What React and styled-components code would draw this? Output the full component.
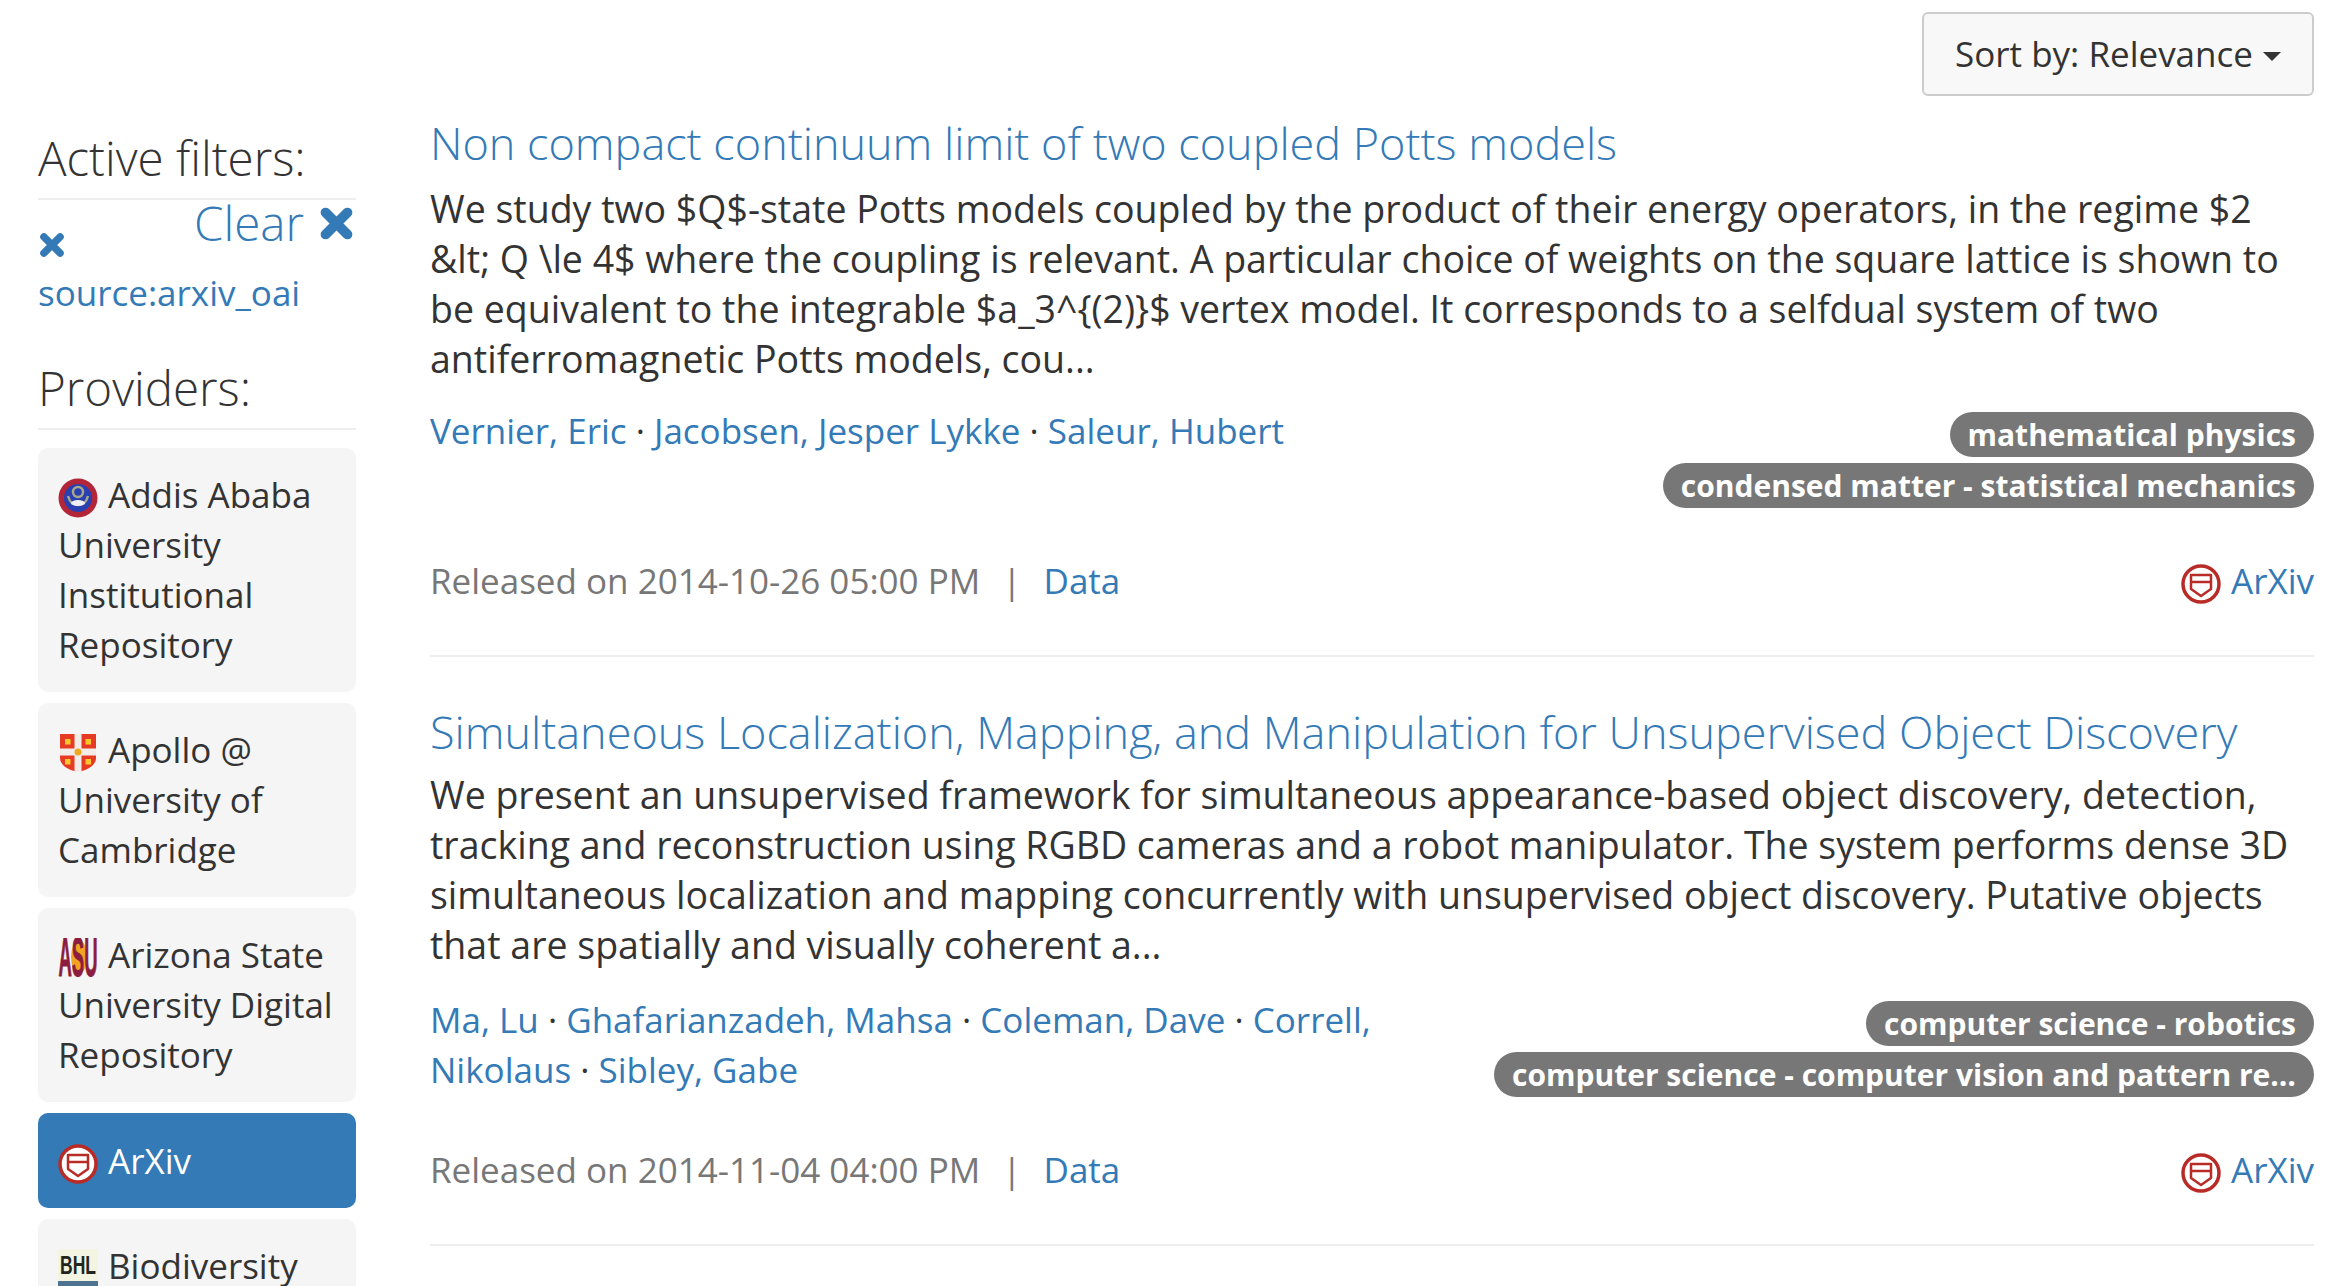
import React from 'react';
import styled, { createGlobalStyle } from 'styled-components';

const GlobalStyle = createGlobalStyle`
  html, body {
    margin: 0;
    height: 100%;
    overflow: hidden;
    background: #fff;
  }
  body {
    font-family: 'Open Sans', sans-serif;
    font-size: 35px;
    line-height: 50px;
    color: #333;
  }
  a {
    color: #337ab7;
    text-decoration: none;
  }
`;

const Page = styled.div`
  height: 1286px;
  overflow: hidden;
  padding: 12px 22px 0 38px;
  box-sizing: border-box;
`;

const Toolbar = styled.div`
  display: flex;
  justify-content: flex-end;
  height: 84px;
`;

const SortButton = styled.button`
  font: inherit;
  color: #333;
  height: 84px;
  width: 392px;
  background: #f8f8f8;
  border: 2px solid #ccc;
  border-radius: 6px;
  display: flex;
  align-items: center;
  justify-content: center;
  gap: 10px;
  padding: 0;
`;

const Caret = styled.span`
  width: 0;
  height: 0;
  border-top: 9px solid #333;
  border-left: 9px solid transparent;
  border-right: 9px solid transparent;
  margin-top: 4px;
`;

const Columns = styled.div`
  display: flex;
  gap: 74px;
`;

const Sidebar = styled.aside`
  width: 318px;
  flex: none;
  padding-top: 37px;
`;

const SideHeading = styled.h4`
  margin: 0;
  font-size: 47.5px;
  font-weight: 300;
  line-height: 50px;
  padding-bottom: 15px;
  border-bottom: 2px solid #eee;
`;

const ClearRow = styled.div`
  position: relative;
  height: 68px;
  padding: 32px 0 0 1px;
  box-sizing: border-box;
`;

const ClearLink = styled.a`
  position: absolute;
  right: 2px;
  top: -2px;
  display: flex;
  align-items: center;
  gap: 15px;
  font-size: 47.5px;
  font-weight: 300;
  line-height: 50px;
`;

const FilterLink = styled.a`
  display: block;
  margin-bottom: 45px;
`;

const ProviderList = styled.div`
  display: flex;
  flex-direction: column;
  gap: 11px;
  margin-top: 18px;
`;

const Provider = styled.a`
  display: block;
  padding: ${({ $active }) => ($active ? '22.5px' : '22px')} 20px;
  border-radius: 10px;
  color: ${({ $active }) => ($active ? '#fff' : '#333')};
  background: ${({ $active }) => ($active ? '#337ab7' : '#f5f5f5')};
`;

const Logo = styled.svg`
  width: 40px;
  height: 40px;
  vertical-align: -10px;
  margin-right: 10px;
`;

const Cross = styled.svg`
  display: block;
  width: ${({ $size }) => $size}px;
  height: ${({ $size }) => $size}px;
  fill: none;
  stroke: #337ab7;
  stroke-width: 9;
  stroke-linecap: round;
`;

const Main = styled.main`
  flex: 1;
  min-width: 0;
  margin-top: 19px;
`;

const Result = styled.article`
  padding-bottom: 49px;
  margin-bottom: 47px;
  border-bottom: 2px solid #eee;
`;

const Title = styled.h3`
  margin: 0;
  font-size: 45px;
  font-weight: 300;
  line-height: 56px;
`;

const Abstract = styled.p`
  margin: ${({ $gap }) => $gap}px 0 0;
  font-size: 37.5px;
`;

const MetaRow = styled.div`
  display: flex;
  justify-content: space-between;
  gap: 40px;
  margin-top: ${({ $gap }) => 35 - $gap}px;
`;

const Authors = styled.div`
  width: 960px;
  flex: none;
`;

const Dot = styled.span`
  color: #333;
`;

const Tags = styled.div`
  display: flex;
  flex-direction: column;
  align-items: flex-end;
  gap: 6px;
  min-width: 0;
  padding-top: 6px;
`;

const Tag = styled.span`
  display: block;
  max-width: 820px;
  box-sizing: border-box;
  height: 45px;
  line-height: 45px;
  padding: 0 18px;
  border-radius: 23px;
  background: #777;
  color: #fff;
  font-size: 30px;
  font-weight: 700;
  white-space: nowrap;
  overflow: hidden;
  text-overflow: ellipsis;
`;

const FootRow = styled.div`
  display: flex;
  justify-content: space-between;
  margin-top: 48px;
  color: #777;
`;

const Pipe = styled.span`
  margin: 0 22px;
`;

const AsuMark = styled.text`
  font-family: 'Liberation Sans', sans-serif;
  font-size: 56px;
  font-weight: 700;
  fill: #8c1d40;
  stroke: #8c1d40;
  stroke-width: 1;
`;

const BhlMark = styled.text`
  font-family: 'Liberation Sans', sans-serif;
  font-size: 25px;
  font-weight: 700;
  fill: #22261d;
`;

const CrossIcon = ({ size }) => (
  <Cross $size={size} viewBox="0 0 32 32">
    <path d="M6 6l20 20M26 6L6 26" />
  </Cross>
);

const ArxivLogo = ({ ring = '#b92b27', fill = '#fff' }) => (
  <Logo viewBox="0 0 40 40">
    <circle cx="20" cy="20" r="18" fill={fill} stroke={ring} strokeWidth="3.5" />
    <path d="M10 11h20v14l-10 7-10-7z" fill="none" stroke={ring} strokeWidth="2.5" strokeLinejoin="round" />
    <path d="M10 18h20" stroke={ring} strokeWidth="2.5" />
  </Logo>
);

const AddisLogo = () => (
  <Logo viewBox="0 0 40 40">
    <circle cx="20" cy="20" r="19.5" fill="#b3263a" />
    <circle cx="20" cy="20" r="14" fill="#2a3fb0" />
    <circle cx="20" cy="14" r="5" fill="none" stroke="#a8a88c" strokeWidth="2.5" />
    <path d="M10 18c2 7 5 9 10 9s8-2 10-9" fill="none" stroke="#a8a88c" strokeWidth="2.5" />
    <ellipse cx="20" cy="25" rx="7" ry="3" fill="#f1eef2" />
  </Logo>
);

const ApolloLogo = () => (
  <Logo viewBox="0 0 40 40">
    <path d="M2 1h36v24c0 7-8 12-18 14C10 37 2 32 2 25z" fill="#e63a25" />
    <path d="M16.500 1h7v38h-7zM2 15.500h36v7H2z" fill="#f2ece8" />
    <circle cx="20" cy="19" r="3.500" fill="#f0a820" />
    <rect x="7" y="6" width="5.500" height="5.500" fill="#fbc52b" />
    <rect x="27.500" y="6" width="5.500" height="5.500" fill="#fbc52b" />
    <rect x="7" y="26" width="5.500" height="5.500" fill="#fbc52b" />
    <rect x="27.500" y="26" width="5.500" height="5.500" fill="#fbc52b" />
  </Logo>
);

const AsuLogo = () => (
  <Logo viewBox="0 0 40 40">
    <ellipse cx="21" cy="19" rx="8" ry="17" fill="#f2a31f" />
    <AsuMark x="20" y="38" textAnchor="middle" textLength="39" lengthAdjust="spacingAndGlyphs">ASU</AsuMark>
  </Logo>
);

const BhlLogo = () => (
  <Logo viewBox="0 0 40 40">
    <rect width="40" height="40" fill="#f3f5e2" />
    <rect y="32" width="40" height="8" fill="#4d7390" />
    <BhlMark x="20" y="25" textAnchor="middle" textLength="36" lengthAdjust="spacingAndGlyphs">BHL</BhlMark>
  </Logo>
);

const providers = [
  { name: 'Addis Ababa University Institutional Repository', logo: <AddisLogo /> },
  { name: 'Apollo @ University of Cambridge', logo: <ApolloLogo /> },
  { name: 'Arizona State University Digital Repository', logo: <AsuLogo /> },
  { name: 'ArXiv', logo: <ArxivLogo />, active: true },
  { name: 'Biodiversity Heritage Library', logo: <BhlLogo /> },
];

const results = [
  {
    title: 'Non compact continuum limit of two coupled Potts models',
    text: 'We study two $Q$-state Potts models coupled by the product of their energy operators, in the regime $2 &lt; Q \\le 4$ where the coupling is relevant. A particular choice of weights on the square lattice is shown to be equivalent to the integrable $a_3^{(2)}$ vertex model. It corresponds to a selfdual system of two antiferromagnetic Potts models, cou...',
    authors: ['Vernier, Eric', 'Jacobsen, Jesper Lykke', 'Saleur, Hubert'],
    tags: ['mathematical physics', 'condensed matter - statistical mechanics'],
    date: '2014-10-26 05:00 PM',
    gap: 13,
  },
  {
    title: 'Simultaneous Localization, Mapping, and Manipulation for Unsupervised Object Discovery',
    text: 'We present an unsupervised framework for simultaneous appearance-based object discovery, detection, tracking and reconstruction using RGBD cameras and a robot manipulator. The system performs dense 3D simultaneous localization and mapping concurrently with unsupervised object discovery. Putative objects that are spatially and visually coherent a...',
    authors: ['Ma, Lu', 'Ghafarianzadeh, Mahsa', 'Coleman, Dave', 'Correll, Nikolaus', 'Sibley, Gabe'],
    tags: ['computer science - robotics', 'computer science - computer vision and pattern recognition'],
    date: '2014-11-04 04:00 PM',
    gap: 10,
  },
];

export default function App() {
  return (
    <Page>
      <GlobalStyle />
      <Toolbar>
        <SortButton>
          Sort by: Relevance <Caret />
        </SortButton>
      </Toolbar>
      <Columns>
        <Sidebar>
          <SideHeading>Active filters:</SideHeading>
          <ClearRow>
            <ClearLink href="#">
              Clear <CrossIcon size={35} />
            </ClearLink>
            <a href="#"><CrossIcon size={26} /></a>
          </ClearRow>
          <FilterLink href="#">source:arxiv_oai</FilterLink>
          <SideHeading>Providers:</SideHeading>
          <ProviderList>
            {providers.map((p) => (
              <Provider key={p.name} href="#" $active={p.active}>
                {p.logo}
                {p.name}
              </Provider>
            ))}
          </ProviderList>
        </Sidebar>
        <Main>
          {results.map((r) => (
            <Result key={r.title}>
              <Title><a href="#">{r.title}</a></Title>
              <Abstract $gap={r.gap}>{r.text}</Abstract>
              <MetaRow $gap={r.gap}>
                <Authors>
                  {r.authors.map((a, i) => (
                    <React.Fragment key={a}>
                      {i > 0 && <Dot> · </Dot>}
                      <a href="#">{a}</a>
                    </React.Fragment>
                  ))}
                </Authors>
                <Tags>
                  {r.tags.map((t) => <Tag key={t}>{t}</Tag>)}
                </Tags>
              </MetaRow>
              <FootRow>
                <span>
                  Released on {r.date}
                  <Pipe>|</Pipe>
                  <a href="#">Data</a>
                </span>
                <a href="#"><ArxivLogo />ArXiv</a>
              </FootRow>
            </Result>
          ))}
        </Main>
      </Columns>
    </Page>
  );
}
